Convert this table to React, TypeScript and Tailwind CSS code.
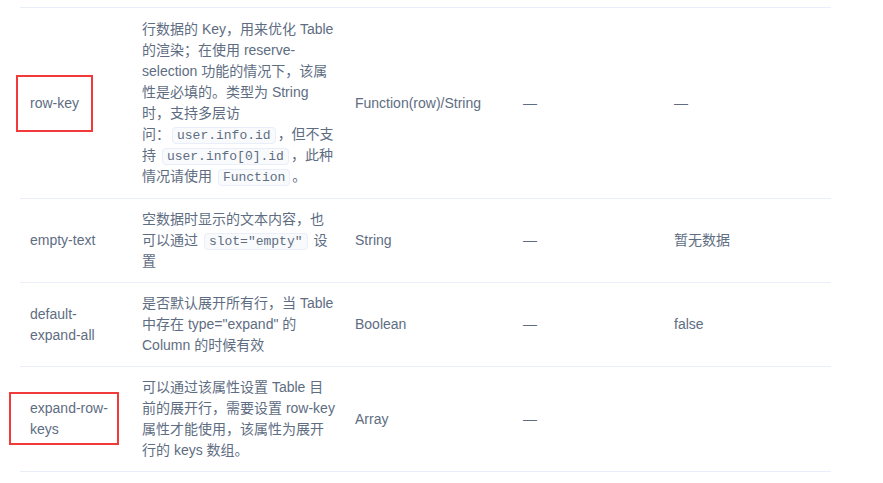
import React from "react";

function Code({ children }: { children: React.ReactNode }) {
  return (
    <code className="mx-[2px] rounded border border-[#eaeefb] bg-[#f9fafc] px-1 font-['Liberation_Mono',monospace] text-[13px] leading-[16px]">
      {children}
    </code>
  );
}

function Marked({
  children,
  box,
}: {
  children: React.ReactNode;
  box: string;
}) {
  return (
    <span className="relative inline-block">
      {children}
      <span className={`absolute border-2 border-[#f33a3a] ${box}`} />
    </span>
  );
}

const td = "border-b border-[#eaeefb] px-[10px] py-[10px] align-middle";

export default function App() {
  return (
    <div className="min-h-screen bg-white pt-[7px] pl-[20px] font-['Liberation_Sans','Noto_Sans_CJK_SC',sans-serif] text-[14px] leading-[21px] text-[#5e6d82]">
      <table className="w-[811px] table-fixed border-collapse border-t border-[#eaeefb] text-left">
        <colgroup>
          <col className="w-[112px]" />
          <col className="w-[213px]" />
          <col className="w-[168px]" />
          <col className="w-[151px]" />
          <col className="w-[167px]" />
        </colgroup>
        <tbody>
          {/* row-key */}
          <tr>
            <td className={td}>
              <Marked box="-left-[14px] -right-[14px] -top-[18px] -bottom-[18px]">
                row-key
              </Marked>
            </td>
            <td className={`${td} whitespace-nowrap !py-[11px]`}>
              行数据的 Key，用来优化 Table
              <br />
              的渲染；在使用 reserve-
              <br />
              selection 功能的情况下，该属
              <br />
              性是必填的。类型为 String
              <br />
              时，支持多层访
              <br />
              问：<Code>user.info.id</Code>，但不支
              <br />
              持 <Code>user.info[0].id</Code>，此种
              <br />
              情况请使用 <Code>Function</Code>。
            </td>
            <td className={td}>Function(row)/String</td>
            <td className={td}>—</td>
            <td className={td}>—</td>
          </tr>

          {/* empty-text */}
          <tr>
            <td className={td}>empty-text</td>
            <td className={`${td} whitespace-nowrap`}>
              空数据时显示的文本内容，也
              <br />
              可以通过 <Code>slot="empty"</Code> 设
              <br />置
            </td>
            <td className={td}>String</td>
            <td className={td}>—</td>
            <td className={td}>暂无数据</td>
          </tr>

          {/* default-expand-all */}
          <tr>
            <td className={td}>default-expand-all</td>
            <td className={`${td} whitespace-nowrap`}>
              是否默认展开所有行，当 Table
              <br />
              中存在 type="expand" 的
              <br />
              Column 的时候有效
            </td>
            <td className={td}>Boolean</td>
            <td className={td}>—</td>
            <td className={td}>false</td>
          </tr>

          {/* expand-row-keys */}
          <tr>
            <td className={td}>
              <Marked box="-left-[21px] right-[3px] -top-[6px] -bottom-[5px]">
                expand-row-keys
              </Marked>
            </td>
            <td className={`${td} whitespace-nowrap`}>
              可以通过该属性设置 Table 目
              <br />
              前的展开行，需要设置 row-key
              <br />
              属性才能使用，该属性为展开
              <br />
              行的 keys 数组。
            </td>
            <td className={td}>Array</td>
            <td className={td}>—</td>
            <td className={td}></td>
          </tr>
        </tbody>
      </table>
    </div>
  );
}
